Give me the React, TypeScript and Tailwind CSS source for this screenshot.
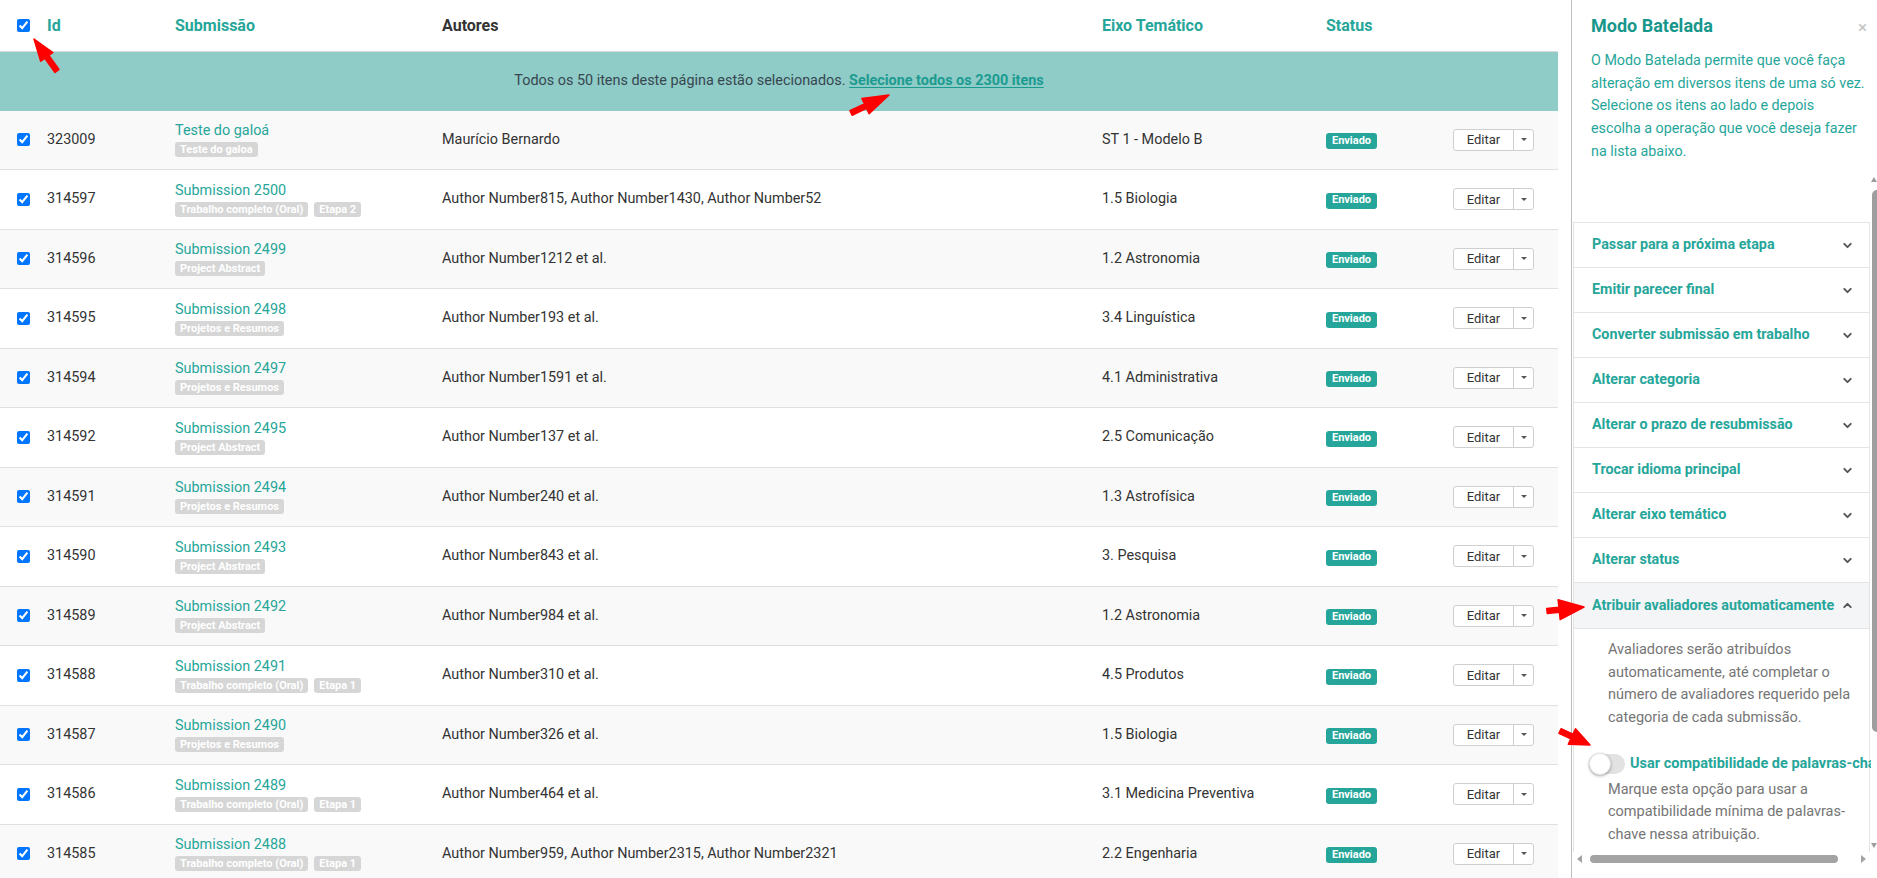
import React from 'react';
import { ChevronDown, ChevronUp } from 'lucide-react';

type Row = {
  id: string;
  title: string;
  tags: string[];
  authors: string;
  axis: string;
};

const rows: Row[] = [
  { id: '323009', title: 'Teste do galoá', tags: ['Teste do galoa'], authors: 'Maurício Bernardo', axis: 'ST 1 - Modelo B' },
  { id: '314597', title: 'Submission 2500', tags: ['Trabalho completo (Oral)', 'Etapa 2'], authors: 'Author Number815, Author Number1430, Author Number52', axis: '1.5 Biologia' },
  { id: '314596', title: 'Submission 2499', tags: ['Project Abstract'], authors: 'Author Number1212 et al.', axis: '1.2 Astronomia' },
  { id: '314595', title: 'Submission 2498', tags: ['Projetos e Resumos'], authors: 'Author Number193 et al.', axis: '3.4 Linguística' },
  { id: '314594', title: 'Submission 2497', tags: ['Projetos e Resumos'], authors: 'Author Number1591 et al.', axis: '4.1 Administrativa' },
  { id: '314592', title: 'Submission 2495', tags: ['Project Abstract'], authors: 'Author Number137 et al.', axis: '2.5 Comunicação' },
  { id: '314591', title: 'Submission 2494', tags: ['Projetos e Resumos'], authors: 'Author Number240 et al.', axis: '1.3 Astrofísica' },
  { id: '314590', title: 'Submission 2493', tags: ['Project Abstract'], authors: 'Author Number843 et al.', axis: '3. Pesquisa' },
  { id: '314589', title: 'Submission 2492', tags: ['Project Abstract'], authors: 'Author Number984 et al.', axis: '1.2 Astronomia' },
  { id: '314588', title: 'Submission 2491', tags: ['Trabalho completo (Oral)', 'Etapa 1'], authors: 'Author Number310 et al.', axis: '4.5 Produtos' },
  { id: '314587', title: 'Submission 2490', tags: ['Projetos e Resumos'], authors: 'Author Number326 et al.', axis: '1.5 Biologia' },
  { id: '314586', title: 'Submission 2489', tags: ['Trabalho completo (Oral)', 'Etapa 1'], authors: 'Author Number464 et al.', axis: '3.1 Medicina Preventiva' },
  { id: '314585', title: 'Submission 2488', tags: ['Trabalho completo (Oral)', 'Etapa 1'], authors: 'Author Number959, Author Number2315, Author Number2321', axis: '2.2 Engenharia' },
];

const operations = [
  'Passar para a próxima etapa',
  'Emitir parecer final',
  'Converter submissão em trabalho',
  'Alterar categoria',
  'Alterar o prazo de resubmissão',
  'Trocar idioma principal',
  'Alterar eixo temático',
  'Alterar status',
];

const cols = 'grid grid-cols-[47px_128px_267px_660px_224px_127px_105px] items-center';

function Check() {
  return <input type="checkbox" checked readOnly className="m-0 h-[13px] w-[13px] accent-[#0075ff]" />;
}

function Tag({ label }: { label: string }) {
  return (
    <span className="rounded-[3px] bg-[#d6d6d6] px-[5px] text-[11px] font-bold leading-[15px] text-white">
      {label}
    </span>
  );
}

function EditButton() {
  return (
    <div className="flex h-[22px] w-[81px] overflow-hidden rounded-[3px] border border-[#cfcfcf] bg-white">
      <span className="flex w-[59px] items-center justify-center text-[13px] text-[#333]">Editar</span>
      <span className="flex flex-1 items-center justify-center border-l border-[#cfcfcf]">
        <span className="h-0 w-0 border-x-[3px] border-t-[3px] border-x-transparent border-t-[#555]" />
      </span>
    </div>
  );
}

// red annotation arrows drawn over the screenshot
function arrow(x1: number, y1: number, x2: number, y2: number, head: number, hw: number, sw: number) {
  const len = Math.hypot(x2 - x1, y2 - y1);
  const dx = (x2 - x1) / len;
  const dy = (y2 - y1) / len;
  const nx = -dy;
  const ny = dx;
  const bx = x2 - dx * head;
  const by = y2 - dy * head;
  const p = (x: number, y: number) => `${x.toFixed(1)},${y.toFixed(1)}`;
  return [
    p(x1 + (nx * sw) / 2, y1 + (ny * sw) / 2),
    p(bx + (nx * sw) / 2, by + (ny * sw) / 2),
    p(bx + (nx * hw) / 2, by + (ny * hw) / 2),
    p(x2, y2),
    p(bx - (nx * hw) / 2, by - (ny * hw) / 2),
    p(bx - (nx * sw) / 2, by - (ny * sw) / 2),
    p(x1 - (nx * sw) / 2, y1 - (ny * sw) / 2),
  ].join(' ');
}

const arrows = [
  [57, 71, 34, 39, 22, 15, 5],
  [851, 113, 889, 95, 26, 17, 5],
  [1547, 611, 1584, 607, 25, 20, 5],
  [1560, 731, 1590, 745, 20, 17, 5],
];

export default function App() {
  return (
    <div className="relative flex h-[878px] w-full overflow-hidden bg-white font-['Roboto',sans-serif]">
      {/* Table */}
      <div className="w-[1558px] shrink-0">
        <div className={`${cols} h-[52px] border-b border-[#d9d9d9] text-[16px] font-bold`}>
          <div className="flex pl-[17px]">
            <Check />
          </div>
          <div className="text-[#26a69a]">Id</div>
          <div className="text-[#26a69a]">Submissão</div>
          <div className="text-[#333]">Autores</div>
          <div className="text-[#26a69a]">Eixo Temático</div>
          <div className="text-[#26a69a]">Status</div>
          <div />
        </div>

        <div className="flex h-[58.5px] items-center justify-center bg-[#8fcbc7] text-[14.4px] text-[#37474f]">
          <span>
            Todos os 50 itens deste página estão selecionados.{' '}
            <span className="font-bold text-[#1b9b90] underline underline-offset-2">Selecione todos os 2300 itens</span>
          </span>
        </div>

        {rows.map((r, i) => (
          <div
            key={r.id}
            className={`${cols} h-[59.5px] border-b border-[#e0e0e0] text-[14.4px] text-[#333] ${
              i % 2 === 0 ? 'bg-[#f9f9f9]' : 'bg-white'
            }`}
          >
            <div className="flex pl-[17px]">
              <Check />
            </div>
            <div>{r.id}</div>
            <div className="flex flex-col items-start">
              <span className="leading-[18px] text-[#26a69a]">{r.title}</span>
              <div className="mt-[2px] flex gap-[6px]">
                {r.tags.map((t) => (
                  <Tag key={t} label={t} />
                ))}
              </div>
            </div>
            <div>{r.authors}</div>
            <div>{r.axis}</div>
            <div>
              <span className="inline-flex h-[16px] w-[51px] items-center justify-center rounded-[3px] bg-[#26a69a] text-[11px] font-bold text-white">
                Enviado
              </span>
            </div>
            <div>
              <EditButton />
            </div>
          </div>
        ))}
      </div>

      <div className="w-[13px] shrink-0" />

      {/* Batch mode panel */}
      <aside className="flex w-[306px] shrink-0 flex-col border-l border-[#bdbdbd]">
        <div className="h-[175px] shrink-0 pl-[19px] pr-[10px] pt-[13px]">
          <div className="flex items-start justify-between">
            <h2 className="text-[18px] font-bold leading-[26px] text-[#17968b]">Modo Batelada</h2>
            <span className="mt-[5px] text-[17px] leading-[18px] text-[#c2c2c2]">×</span>
          </div>
          <p className="mt-[10px] whitespace-nowrap text-[14.3px] leading-[22.7px] text-[#26a69a]">
            O Modo Batelada permite que você faça
            <br />
            alteração em diversos itens de uma só vez.
            <br />
            Selecione os itens ao lado e depois
            <br />
            escolha a operação que você deseja fazer
            <br />
            na lista abaixo.
          </p>
        </div>

        <div className="flex h-[691px] shrink-0 flex-col">
          <div className="flex min-h-0 flex-1">
            <div className="w-[299px] overflow-hidden pt-[47px]">
              <div className="ml-[1px] w-[297px] border-x border-t border-[#e4e4e4]">
                {operations.map((op) => (
                  <div
                    key={op}
                    className="flex h-[45px] items-center justify-between border-b border-[#e4e4e4] pl-[18px] pr-[15px]"
                  >
                    <span className="text-[14.3px] font-bold text-[#26a69a]">{op}</span>
                    <ChevronDown size={13} strokeWidth={3.5} className="text-[#555]" />
                  </div>
                ))}
                <div className="flex h-[46px] items-center justify-between border-b border-[#e4e4e4] bg-[#f4f5f7] pl-[18px] pr-[15px]">
                  <span className="text-[14.3px] font-bold text-[#26a69a]">Atribuir avaliadores automaticamente</span>
                  <ChevronUp size={13} strokeWidth={3.5} className="text-[#555]" />
                </div>
                <div className="pb-[20px] pt-[10px]">
                  <p className="ml-[34px] w-[248px] text-[14.5px] leading-[22.7px] text-[#757575]">
                    Avaliadores serão atribuídos automaticamente, até completar o número de avaliadores requerido pela
                    categoria de cada submissão.
                  </p>
                  <div className="ml-[15px] mt-[23px] flex items-center gap-[5px] whitespace-nowrap">
                    <span className="flex h-[20px] w-[36px] shrink-0 items-center rounded-full bg-[#e2e2e2]">
                      <span className="h-[22px] w-[22px] rounded-full border border-[#e6e6e6] bg-white shadow-[0_1px_3px_rgba(0,0,0,0.35)]" />
                    </span>
                    <span className="text-[14.5px] font-bold text-[#26a69a]">Usar compatibilidade de palavras-chave</span>
                  </div>
                  <p className="ml-[34px] mt-[4px] w-[248px] text-[14.5px] leading-[22.7px] text-[#757575]">
                    Marque esta opção para usar a compatibilidade mínima de palavras-chave nessa atribuição.
                  </p>
                </div>
              </div>
            </div>
            {/* vertical scrollbar */}
            <div className="flex w-[6px] flex-col items-end">
              <span className="mt-[2px] h-0 w-0 border-x-[3px] border-b-[5px] border-x-transparent border-b-[#9e9e9e]" />
              <span className="mt-[8px] h-[542px] w-[5px] rounded-l-full bg-[#9e9e9e]" />
              <span className="flex-1" />
              <span className="mb-[4px] h-0 w-0 border-x-[3px] border-t-[5px] border-x-transparent border-t-[#9e9e9e]" />
            </div>
          </div>
          {/* horizontal scrollbar */}
          <div className="flex h-[14px] items-center pl-[5px] pr-[11px]">
            <span className="h-0 w-0 border-y-[4px] border-r-[5px] border-y-transparent border-r-[#a3a3a3]" />
            <span className="ml-[8px] h-[8px] w-[248px] rounded-full bg-[#a3a3a3]" />
            <span className="flex-1" />
            <span className="h-0 w-0 border-y-[4px] border-l-[5px] border-y-transparent border-l-[#a3a3a3]" />
          </div>
        </div>
      </aside>

      <svg className="pointer-events-none absolute inset-0" width="1877" height="878">
        {arrows.map((a, i) => (
          <polygon
            key={i}
            points={arrow(a[0], a[1], a[2], a[3], a[4], a[5], a[6])}
            fill="#ff0000"
            stroke="#ff0000"
            strokeWidth={1.5}
            strokeLinejoin="round"
          />
        ))}
      </svg>
    </div>
  );
}
